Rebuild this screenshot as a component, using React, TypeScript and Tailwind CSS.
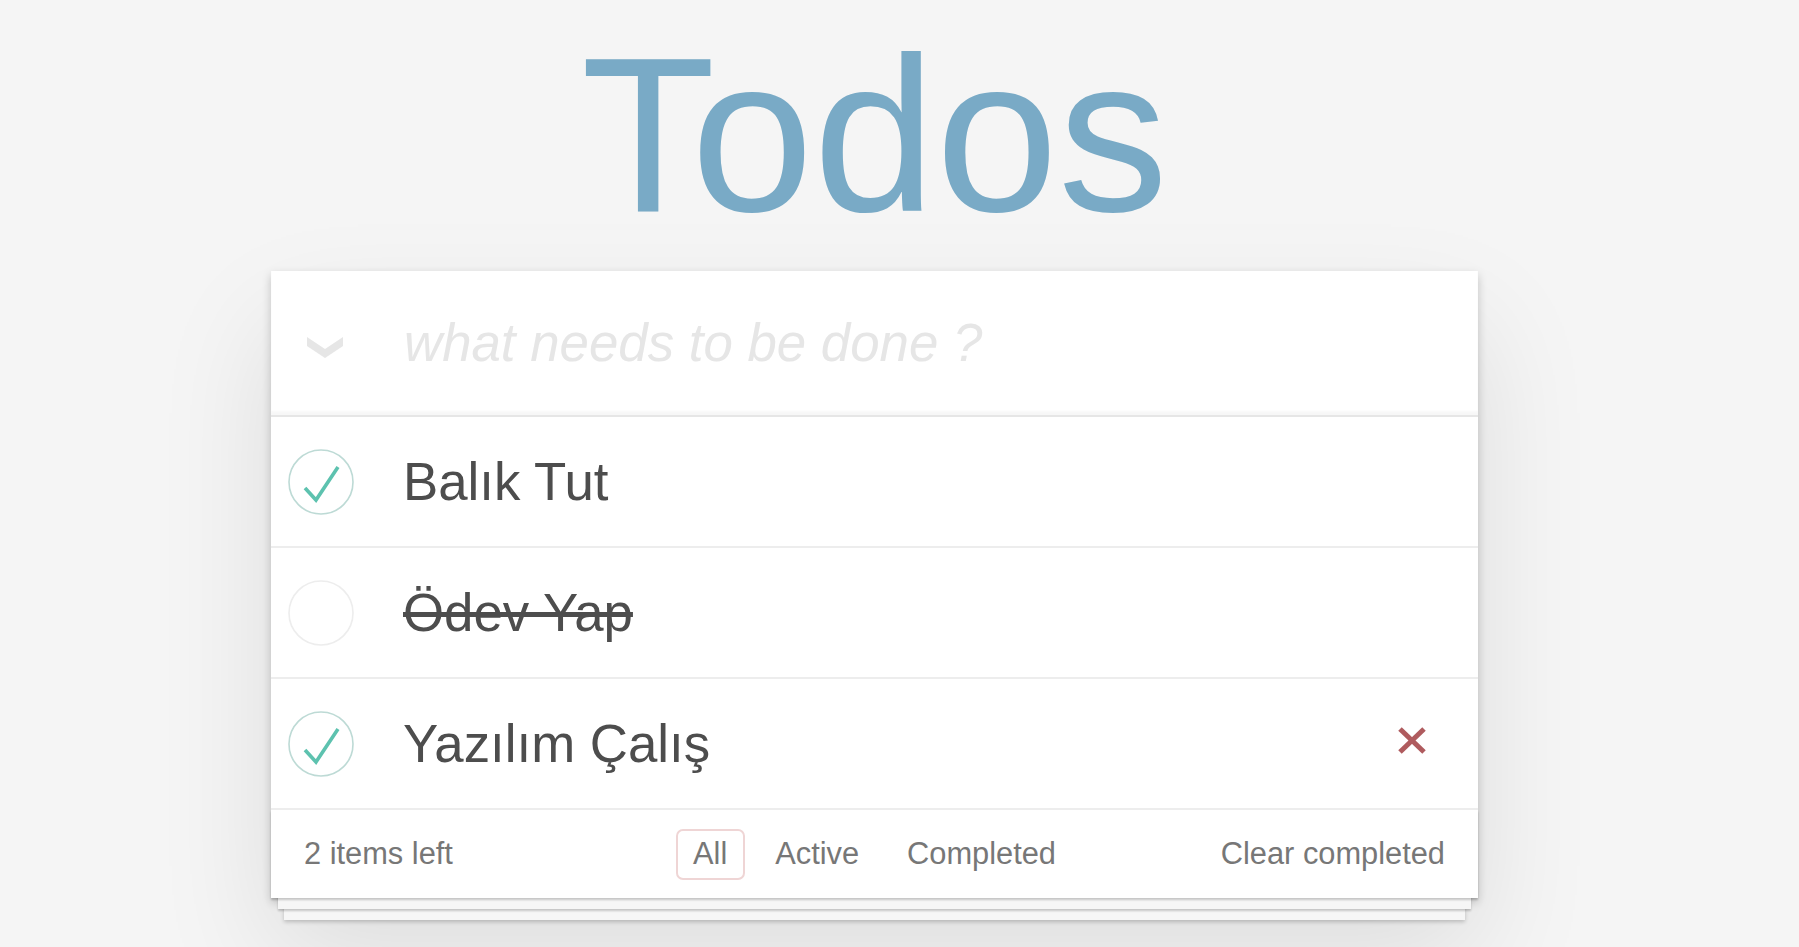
import React from "react";

function CheckCircle({ checked }: { checked: boolean }) {
  return (
    <svg width="66" height="66" viewBox="0 0 66 66" className="shrink-0">
      <circle cx="33" cy="33" r="32" fill="none" stroke={checked ? "#bddad5" : "#ededed"} strokeWidth="1.6" />
      {checked && (
        <polyline points="17,39 28,51 50,18" fill="none" stroke="#5dc2af" strokeWidth="3.6" strokeLinejoin="miter" />
      )}
    </svg>
  );
}

const todos = [
  { text: "Balık Tut", checked: true, strike: false, del: false },
  { text: "Ödev Yap", checked: false, strike: true, del: false },
  { text: "Yazılım Çalış", checked: true, strike: false, del: true },
];

export default function App() {
  return (
    <div className="min-h-screen overflow-hidden bg-[#f5f5f5] font-['Liberation_Sans',Arial,sans-serif] text-[#4d4d4d]">
      <div className="ml-[271px] w-[1207px] pt-[25px]">
        <h1 className="h-[220px] text-center text-[220px] leading-[220px] font-normal tracking-normal text-[#79aac6]">
          Todos
        </h1>
        <section className="mt-[26px] bg-white shadow-[0_4px_9px_0_rgba(0,0,0,0.2),0_55px_110px_0_rgba(0,0,0,0.1)]">
          <header className="flex h-[144px] items-center shadow-[inset_0_-4px_2px_rgba(0,0,0,0.03)]">
            <svg width="36" height="21" viewBox="0 0 36 21" className="ml-[36px] mt-[9px] shrink-0">
              <polygon points="0,0 18,12 36,0 36,9 18,21 0,9" fill="#e6e6e6" />
            </svg>
            <input
              className="ml-[61px] flex-1 bg-transparent text-[52.8px] italic text-[#4d4d4d] outline-none placeholder:text-[#e6e6e6]"
              placeholder="what needs to be done ?"
            />
          </header>
          <ul className="border-t-2 border-[#e6e6e6]">
            {todos.map((t) => (
              <li key={t.text} className="flex h-[131px] items-center border-b-2 border-[#ededed]">
                <div className="ml-[17px]">
                  <CheckCircle checked={t.checked} />
                </div>
                <span className={`ml-[49px] text-[52.8px] leading-[1.2] text-[#4d4d4d] ${t.strike ? "line-through" : ""}`}>
                  {t.text}
                </span>
                {t.del && (
                  <svg width="28" height="27" viewBox="0 0 28 27" className="mb-[6px] ml-auto mr-[52px] shrink-0">
                    <line x1="2" y1="2" x2="26" y2="25" stroke="#af5b5e" strokeWidth="5" />
                    <line x1="26" y1="2" x2="2" y2="25" stroke="#af5b5e" strokeWidth="5" />
                  </svg>
                )}
              </li>
            ))}
          </ul>
          <footer className="grid h-[88px] grid-cols-[1fr_auto_1fr] items-center px-[33px] text-[30.8px] text-[#777] shadow-[0_2px_2px_rgba(0,0,0,0.2),0_18px_0_-7px_#f6f6f6,0_20px_2px_-7px_rgba(0,0,0,0.2),0_35px_0_-13px_#f6f6f6,0_37px_4px_-13px_rgba(0,0,0,0.2)]">
            <span>2 items left</span>
            <div className="flex items-center">
              <span className="mx-[6.6px] flex h-[51px] items-center rounded-[7px] border-2 border-[#efd5d5] px-[15.4px]">All</span>
              <span className="mx-[6.6px] flex h-[51px] items-center rounded-[7px] border-2 border-transparent px-[15.4px]">Active</span>
              <span className="mx-[6.6px] flex h-[51px] items-center rounded-[7px] border-2 border-transparent px-[15.4px]">Completed</span>
            </div>
            <span className="text-right">Clear completed</span>
          </footer>
        </section>
      </div>
    </div>
  );
}
